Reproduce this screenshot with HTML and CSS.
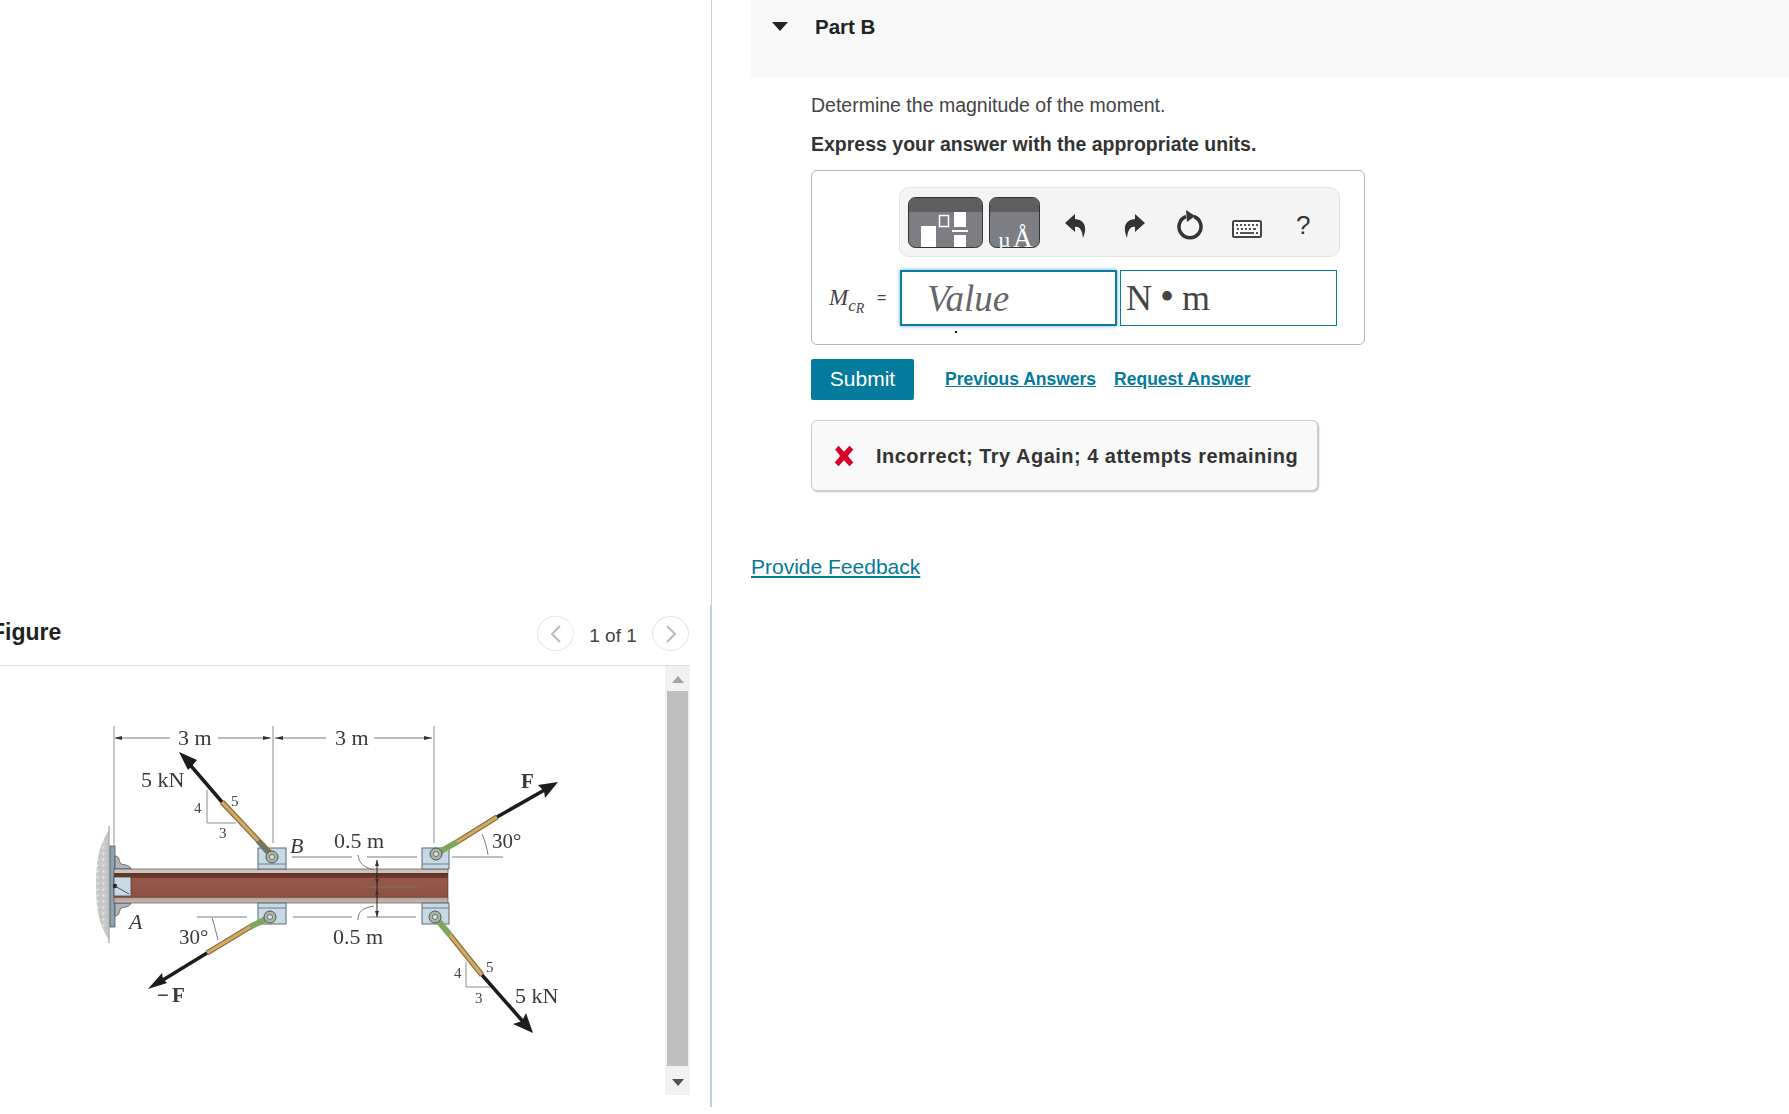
FILE: index.html
```html
<!DOCTYPE html>
<html lang="en">
<head>
<meta charset="utf-8">
<title>Part B</title>
<link rel="stylesheet" href="styles.css">
</head>
<body>
<div class="page">
  <aside class="left">
    <div class="left-spacer"></div>
    <section class="figure-panel">
      <header class="figure-head">
        <h2 class="figure-title">Figure</h2>
        <nav class="pager">
          <span class="pager-btn"><svg width="14" height="20" viewBox="0 0 14 20"><path class="chev" d="M11 2 3 10l8 8"/></svg></span>
          <span class="pager-text">1 of 1</span>
          <span class="pager-btn"><svg width="14" height="20" viewBox="0 0 14 20"><path class="chev" d="M3 2l8 8-8 8"/></svg></span>
        </nav>
      </header>
      <div class="figure-scroll">
        <div class="figure-canvas">
          <svg class="diagram" width="665" height="429" viewBox="0 666 665 429">
            <defs>
              <linearGradient id="beam" x1="0" y1="0" x2="0" y2="1">
                <stop offset="0" stop-color="#cfc4bc"/><stop offset=".12" stop-color="#cfc4bc"/>
                <stop offset=".13" stop-color="#5e3328"/><stop offset=".26" stop-color="#74392b"/>
                <stop offset=".27" stop-color="#96584a"/><stop offset=".8" stop-color="#8f5143"/>
                <stop offset=".83" stop-color="#6b4a40"/><stop offset=".86" stop-color="#b6a49b"/>
                <stop offset="1" stop-color="#c9bdb5"/>
              </linearGradient>
              <pattern id="stipple" width="6" height="6" patternUnits="userSpaceOnUse">
                <rect width="6" height="6" fill="#c9c9c9"/>
                <circle cx="1.500" cy="1.500" r=".9" fill="#eee"/>
                <circle cx="4.500" cy="4" r=".7" fill="#b2b2b2"/>
              </pattern>
            </defs>
            <!-- wall -->
            <path d="M109 830C99 845 96 860 96 885S99 925 109 940Z" fill="url(#stipple)"/>
            <path class="ln" d="M109 826V943"/>
            <rect x="110" y="846" width="5" height="81" fill="#8fa3b0" stroke="#444" stroke-width=".7"/>
            <path d="M115 856c5 0 4 6 6 8 4 1 9 1 10 5h-16ZM115 916c5 0 4-6 6-8 4-1 9-1 10-5h-16Z" fill="#a9b6bd" stroke="#555" stroke-width=".8"/>
            <!-- dimension lines -->
            <path class="ln" d="M114 726V846M273 726V843M434 726V843"/>
            <path class="dim" d="M116 738H170M218 738H271M275 738H326M374 738H432"/>
            <path class="tip" d="M114 738l8-2v4ZM271 738l-8-2v4ZM275 738l8-2v4ZM432 738l-8-2v4Z"/>
            <!-- beam -->
            <rect x="114" y="869" width="334" height="34" fill="url(#beam)" stroke="#4a3a35" stroke-width=".6"/>
            <rect x="114" y="877" width="17" height="19" fill="#c6d9e5" stroke="#444" stroke-width=".8"/>
            <circle cx="115" cy="886" r="2.200" fill="#222"/>
            <path d="M115 886l14 8" stroke="#555" fill="none"/>
            <!-- brackets -->
            <g class="bracket">
              <rect x="258" y="848" width="28" height="21"/>
              <rect x="258" y="903" width="28" height="21"/>
              <rect x="422" y="848" width="27" height="21"/>
              <rect x="422" y="903" width="27" height="21"/>
            </g>
            <path class="bracket-line" d="M258 864H286M258 908H286M422 864H449M422 908H449"/>
            <!-- rods -->
            <path class="rod-edge" d="M270 853 222 802"/><path class="rod" d="M270 853 222 802"/>
            <path class="arrow" d="M222 802 186 760"/>
            <path class="tip-b" d="M179 752 197 760 192 766 188 770Z"/>
            <path class="clevis" d="M272 857 258 841"/>
            <path class="rod-edge" d="M250 927 207 953"/><path class="rod" d="M250 927 207 953"/>
            <path class="arrow" d="M207 953 158 983"/>
            <path class="tip-b" d="M148 989 162 973 163 979 167 983Z"/>
            <path class="clevis-g" d="M270 917 250 927"/>
            <path class="rod-edge" d="M457 842 497 817"/><path class="rod" d="M457 842 497 817"/>
            <path class="arrow" d="M497 817 548 788"/>
            <path class="tip-b" d="M558 782 538 785 544 791 545 798Z"/>
            <path class="clevis-g" d="M436 854 457 842"/>
            <path class="rod-edge" d="M450 935 482 975"/><path class="rod" d="M450 935 482 975"/>
            <path class="arrow" d="M482 975 526 1025"/>
            <path class="tip-b" d="M533 1033 513 1024 522 1021 526 1013Z"/>
            <path class="clevis-g" d="M435 917 450 935"/>
            <g class="pin">
              <circle cx="272" cy="857" r="6"/><circle cx="270" cy="917" r="6"/>
              <circle cx="436" cy="854" r="6"/><circle cx="435" cy="917" r="6"/>
            </g>
            <g class="pin-in">
              <circle cx="272" cy="857" r="2.500"/><circle cx="270" cy="917" r="2.500"/>
              <circle cx="436" cy="854" r="2.500"/><circle cx="435" cy="917" r="2.500"/>
            </g>
            <!-- triangles and leaders -->
            <path class="ln thin" d="M207 790V823H236M466 962V987H490"/>
            <path class="ln" d="M292 857H352M367 857H417M293 917H352M367 917H416M197 917H247M452 857H503"/>
            <path class="dim" d="M358 855c1 8 5 12 16 15M358 920c0-8 4-12 16-14M212 918c3 8 4 15 6 22M482 834c3 7 5 14 6 21M367 887H417"/>
            <path class="dark" d="M377 860V917"/>
            <path class="tip" d="M377 860l-2 6h4ZM377 917l-2-6h4ZM377 884l-2-5h4ZM377 890l-2 5h4Z"/>
            <!-- labels -->
            <text class="lbl" x="178" y="745">3 m</text>
            <text class="lbl" x="335" y="745">3 m</text>
            <text class="lbl" x="141" y="787">5 kN</text>
            <text class="lbl" x="334" y="848">0.5 m</text>
            <text class="lbl" x="333" y="944">0.5 m</text>
            <text class="lbl deg" x="179" y="944">30°</text>
            <text class="lbl deg" x="492" y="848">30°</text>
            <text class="lbl" x="515" y="1003">5 kN</text>
            <text class="lbl it" x="290" y="853">B</text>
            <text class="lbl it" x="129" y="929">A</text>
            <text class="lbl bd bd-neg" x="157" y="1002">−F</text>
            <text class="lbl bd" x="521" y="788">F</text>
            <text class="sm" x="194" y="813">4</text>
            <text class="sm" x="231" y="806">5</text>
            <text class="sm" x="219" y="838">3</text>
            <text class="sm" x="454" y="978">4</text>
            <text class="sm" x="486" y="972">5</text>
            <text class="sm" x="475" y="1003">3</text>
          </svg>
        </div>
        <div class="scrollbar">
          <span class="arrow-up"></span>
          <span class="thumb"></span>
          <span class="arrow-down"></span>
        </div>
      </div>
    </section>
  </aside>
  <main class="right">
    <header class="part-head">
      <span class="caret"></span>
      <h1 class="part-title">Part B</h1>
    </header>
    <div class="part-body">
      <p class="question">Determine the magnitude of the moment.</p>
      <p class="instruction">Express your answer with the appropriate units.</p>
      <div class="answer-box">
        <div class="toolbar">
          <svg class="tool-a" width="75" height="51" viewBox="0 0 75 51">
            <rect class="tb-body" x=".5" y=".5" width="74" height="50" rx="7"/>
            <path class="tb-head" d="M1 15V7.500A6.500 6.500 0 0 1 7.500 1h60A6.500 6.500 0 0 1 74 7.500V15Z"/>
            <path class="tb-white" d="M13 29h15v21H13ZM46 15h12v15H46ZM46 38h12v12H46ZM44 33h16v2H44Z"/>
            <rect class="tb-outline" x="31.500" y="18.500" width="9" height="11"/>
          </svg>
          <svg class="tool-b" width="51" height="51" viewBox="0 0 51 51">
            <rect class="tb-body" x=".5" y=".5" width="50" height="50" rx="7"/>
            <path class="tb-head" d="M1 15V7.500A6.500 6.500 0 0 1 7.500 1h36A6.500 6.500 0 0 1 50 7.500V15Z"/>
            <text class="tb-mu" x="9" y="50">µ</text>
            <text class="tb-a" x="24" y="50">Å</text>
          </svg>
          <svg class="t-undo" width="21" height="24" viewBox="0 0 21 24"><path class="ic" d="M10 0 0 9l10 9v-5c4-1 7 2 8 11 4-9 3-18-8-19Z"/></svg>
          <svg class="t-redo" width="21" height="24" viewBox="0 0 21 24"><path class="ic" d="M11 0l10 9-10 9v-5c-4-1-7 2-8 11-4-9-3-18 8-19Z"/></svg>
          <svg class="t-reset" width="26" height="30" viewBox="0 0 26 30"><path class="ic-s" d="M9 6.500A11 11 0 1 0 17 6.500"/><path class="ic" d="M9 0l9 6-8 6Z"/></svg>
          <svg class="t-keys" width="30" height="18" viewBox="0 0 30 18"><rect class="kb" x="1" y="1" width="28" height="16" rx="1.500"/><path class="kb-keys" d="M4 4h2v2H4ZM8 4h2v2H8ZM12 4h2v2h-2ZM16 4h2v2h-2ZM20 4h2v2h-2ZM24 4h2v2h-2ZM5 8h2v2H5ZM9 8h2v2H9ZM13 8h2v2h-2ZM17 8h2v2h-2ZM21 8h3v2h-3ZM8 12h14v2H8ZM4 12h2v2H4ZM24 12h2v2h-2Z"/></svg>
          <span class="t-help">?</span>
        </div>
        <div class="answer-row">
          <span class="var"><i>M</i><sub><i>c</i><i class="var-r">R</i></sub></span>
          <span class="eq">=</span>
          <span class="field field-focus"><span class="placeholder">Value</span></span>
          <span class="field field-unit"><span class="unit">N<span class="dot">•</span>m</span></span>
          <span class="speck"></span>
        </div>
      </div>
      <div class="actions">
        <button class="submit" type="button">Submit</button>
        <a class="act-link" href="#">Previous Answers</a>
        <a class="act-link" href="#">Request Answer</a>
      </div>
      <div class="feedback">
        <svg class="x-icon" width="24" height="24" viewBox="0 0 20 22"><path d="M2 5 5 1.500l5 5.500 5-5.500L18.500 5 13.500 11l5 6-3.500 3.500-5-5.500-5 5.500L1.500 17l5-6Z"/></svg>
        <span class="feedback-text">Incorrect; Try Again; 4 attempts remaining</span>
      </div>
    </div>
    <a class="provide" href="#">Provide Feedback</a>
  </main>
</div>
</body>
</html>
```
FILE: styles.css
```css
* { box-sizing: border-box; }
html, body { margin: 0; padding: 0; background: #fff; }
body { font-family: "Liberation Sans", Arial, sans-serif; color: #333; overflow: hidden; }
.page { display: flex; width: 1789px; height: 1114px; }

/* left */
.left { width: 712px; flex: none; display: flex; flex-direction: column; overflow: hidden; }
.left-spacer { height: 605px; border-right: 1px solid #c8cdd8; }
.figure-panel { height: 502px; padding-right: 20px; border-right: 2px solid #bcd0e2; }
.figure-head { height: 61px; display: flex; align-items: flex-start; justify-content: space-between; border-bottom: 1px solid #ddd; }
.figure-title { margin: 14px 0 0 -9px; font-size: 23px; line-height: 26px; font-weight: 700; color: #222; }
.pager { display: flex; align-items: center; margin-top: 11px; margin-right: 1px; }
.pager-btn { width: 37px; height: 35px; border: 1px solid #e6e6e6; border-radius: 50%; display: flex; align-items: center; justify-content: center; }
.chev { fill: none; stroke: #bbb; stroke-width: 2; }
.pager-text { width: 78px; text-align: center; font-size: 19px; color: #444; position: relative; top: 2px; }
.figure-scroll { display: flex; height: 429px; }
.figure-canvas { width: 665px; flex: none; }
.diagram { display: block; filter: blur(.6px); }
.scrollbar { width: 25px; background: #f1f1f1; display: flex; flex-direction: column; align-items: center; }
.arrow-up { margin-top: 10px; width: 0; height: 0; border: 6px solid transparent; border-top: 0; border-bottom: 7px solid #a3a3a3; }
.thumb { width: 21px; height: 375px; margin-top: 8px; background: #bfbfbf; }
.arrow-down { margin-top: 13px; width: 0; height: 0; border: 6px solid transparent; border-bottom: 0; border-top: 7px solid #505050; }

/* diagram */
.ln { fill: none; stroke: #a8a8a8; stroke-width: 1.300; }
.thin { stroke: #8c8c8c; stroke-width: 1; }
.dim { fill: none; stroke: #777; stroke-width: 1; }
.dark { fill: none; stroke: #222; stroke-width: 1; }
.tip { fill: #333; }
.tip-b { fill: #1c1c1c; }
.arrow { fill: none; stroke: #1c1c1c; stroke-width: 3.500; }
.rod-edge { fill: none; stroke: #8f6f38; stroke-width: 5.500; }
.rod { fill: none; stroke: #d0ab68; stroke-width: 3; }
.clevis { fill: none; stroke: #6d7468; stroke-width: 5; }
.clevis-g { fill: none; stroke: #7fa65d; stroke-width: 6; }
.bracket rect { fill: #c6d9e5; stroke: #5d6b75; stroke-width: 1; }
.bracket-line { fill: none; stroke: #6f808b; stroke-width: 1; }
.pin circle { fill: #a9b5a4; stroke: #4d5a50; stroke-width: 1; }
.pin-in circle { fill: #e3e6df; stroke: #556; stroke-width: .8; }
.lbl { font-family: "Liberation Serif", serif; font-size: 22px; fill: #3a3a3a; }
.deg { font-size: 21px; }
.it { font-style: italic; font-size: 22px; }
.bd { font-weight: 700; font-size: 21px; }
.bd-neg { letter-spacing: 3px; }
.sm { font-family: "Liberation Serif", serif; font-size: 15px; fill: #444; }

/* right */
.right { flex: 1; min-width: 0; }
.part-head { margin-left: 39px; height: 77px; background: #f8f8f8; display: flex; align-items: flex-start; }
.caret { margin: 22px 0 0 21px; width: 0; height: 0; border-left: 8px solid transparent; border-right: 8px solid transparent; border-top: 9px solid #222; }
.part-title { margin: 14px 0 0 27px; font-size: 20.500px; line-height: 26px; font-weight: 700; color: #222; }
.part-body { padding-left: 99px; }
.question { margin: 16px 0 0; font-size: 19.500px; line-height: 24px; color: #444; }
.instruction { margin: 15px 0 0; font-size: 19.500px; line-height: 24px; font-weight: 700; color: #333; }
.answer-box { position: relative; margin-top: 14px; width: 554px; height: 175px; border: 1px solid #b5b5b5; border-radius: 6px; padding: 16px 0 0 87px; }
.toolbar { width: 441px; height: 70px; background: #f4f4f4; border: 1px solid #e4e4e4; border-radius: 10px; position: relative; display: flex; align-items: flex-start; padding: 9px 0 0 8px; }
.tool-a { flex: none; }
.tool-b { flex: none; margin-left: 6px; }
.t-undo { flex: none; margin: 17px 0 0 25px; }
.t-redo { flex: none; margin: 17px 0 0 38px; }
.t-reset { flex: none; margin: 13px 0 0 32px; }
.t-keys { flex: none; margin: 23px 0 0 29px; }
.t-help { flex: none; margin: 13px 0 0 34px; font-size: 26px; line-height: 30px; color: #333; }
.tb-body { fill: #7d7d84; stroke: #333; stroke-width: 1; }
.tb-head { fill: #5e5e5e; }
.tb-white { fill: #fff; }
.tb-outline { fill: none; stroke: #fff; stroke-width: 1.500; }
.tb-mu { font-family: "Liberation Serif", serif; font-size: 22px; fill: #fff; }
.tb-a { font-family: "Liberation Serif", serif; font-size: 27px; fill: #fff; }
.ic { fill: #333; }
.ic-s { fill: none; stroke: #333; stroke-width: 3.500; }
.kb { fill: #fff; stroke: #444; stroke-width: 2; }
.kb-keys { fill: #555; }
.answer-row { display: flex; align-items: center; height: 56px; margin: 13px 0 0 -87px; padding-left: 17px; }
.var { width: 48px; font-family: "Liberation Serif", serif; font-size: 23px; color: #444; white-space: nowrap; }
.var sub { font-size: 17px; line-height: 0; }
.var-r { font-size: 14px; position: relative; top: 2px; }
.eq { width: 23px; font-size: 16px; color: #444; }
.field { height: 56px; width: 217px; display: flex; align-items: center; flex: none; font-family: "Liberation Serif", serif; font-size: 36px; }
.field-focus { border: 2px solid #0a7ca0; box-shadow: 0 0 4px #5fa9c3; }
.field-unit { margin-left: 3px; border: 1px solid #0a7ca0; color: #444; }
.placeholder { margin-left: 25px; font-size: 37px; font-style: italic; color: #666; }
.unit { margin-left: 5px; }
.dot { margin: 0 8px; font-size: 40px; line-height: 0; }
.speck { position: absolute; left: 143px; top: 160px; width: 2px; height: 2px; background: #111; }
.actions { display: flex; align-items: center; margin-top: 13px; height: 42px; }
.submit { width: 103px; height: 41px; border: 0; border-radius: 2px; background: #047a9c; color: #fff; font: 21px "Liberation Sans", Arial, sans-serif; padding: 0; }
.act-link { font-size: 17.500px; font-weight: 700; color: #047a9c; margin-left: 31px; }
.act-link + .act-link { margin-left: 18px; }
.feedback { margin-top: 20px; width: 507px; height: 71px; background: #f9f9f9; border: 1px solid #ccc; border-radius: 6px; box-shadow: 1px 1px 2px #bbb; display: flex; align-items: center; padding-left: 20px; }
.x-icon { flex: none; }
.x-icon path { fill: #d9002b; }
.feedback-text { margin-left: 20px; font-size: 20px; letter-spacing: .49px; font-weight: 700; color: #333; white-space: nowrap; position: relative; top: 1px; }
.provide { display: inline-block; margin: 64px 0 0 39px; font-size: 21px; line-height: 24px; color: #047a9c; }
```
